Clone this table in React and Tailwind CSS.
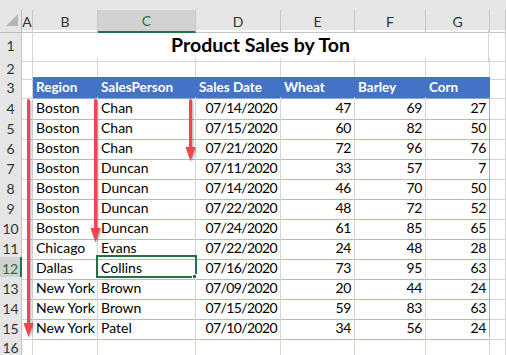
const cols = "grid grid-cols-[22px_11px_65px_98px_85px_74px_71px_64px_1fr]";

const rows = [
  ["Boston", "Chan", "07/14/2020", 47, 69, 27],
  ["Boston", "Chan", "07/15/2020", 60, 82, 50],
  ["Boston", "Chan", "07/21/2020", 72, 96, 76],
  ["Boston", "Duncan", "07/11/2020", 33, 57, 7],
  ["Boston", "Duncan", "07/14/2020", 46, 70, 50],
  ["Boston", "Duncan", "07/22/2020", 48, 72, 52],
  ["Boston", "Duncan", "07/24/2020", 61, 85, 65],
  ["Chicago", "Evans", "07/22/2020", 24, 48, 28],
  ["Dallas", "Collins", "07/16/2020", 73, 95, 63],
  ["New York", "Brown", "07/09/2020", 20, 44, 24],
  ["New York", "Brown", "07/15/2020", 59, 83, 63],
  ["New York", "Patel", "07/10/2020", 34, 56, 24],
];

const grid = "border-r border-b border-[#d4d4d4]";
const dataCell =
  "border-r border-b border-r-[#d4d4d4] border-b-[#a9b9e0] flex items-end pb-[1px] whitespace-nowrap";

function RowHead({ n, active }) {
  return active ? (
    <div className="flex items-center justify-center border-b border-[#c6c6c6] border-r-2 border-r-[#217346] bg-[#d2d2d2] text-[14px] text-[#217346]">
      {n}
    </div>
  ) : (
    <div className="flex items-center justify-center border-r border-b border-[#c6c6c6] bg-[#e6e6e6] text-[14px] text-[#333]">
      {n}
    </div>
  );
}

function Arrow({ left, top, height }) {
  return (
    <svg
      className="absolute drop-shadow-[1px_1px_1px_rgba(0,0,0,0.35)]"
      style={{ left, top }}
      width="11"
      height={height}
      viewBox={`0 0 11 ${height}`}
    >
      <rect x="4" y="0" width="3" height={height - 10} rx="1.5" fill="#f0464d" />
      <polygon points={`0.5,${height - 14} 10.5,${height - 14} 5.5,${height}`} fill="#f0464d" />
    </svg>
  );
}

export default function App() {
  return (
    <div className="relative h-[355px] w-[506px] overflow-hidden bg-white font-['Lato','Liberation_Sans',sans-serif] text-black">
      <div className="h-[10px] bg-[#e6e6e6]" />

      {/* column letters */}
      <div className={`${cols} h-[20px] bg-[#e6e6e6] text-[14px] text-[#333]`}>
        <div className="relative border-r border-b border-[#bdbdbd]">
          <svg className="absolute left-[6px] top-[4px]" width="12" height="12" viewBox="0 0 12 12">
            <polygon points="12,0 12,12 0,12" fill="#b5b5b5" />
          </svg>
        </div>
        {["A", "B"].map((c) => (
          <div key={c} className="flex items-center justify-center border-r border-b border-[#c6c6c6]">
            {c}
          </div>
        ))}
        <div className="flex items-center justify-center border-r border-[#c6c6c6] border-b-2 border-b-[#217346] bg-[#d2d2d2] text-[#217346]">
          C
        </div>
        {["D", "E", "F", "G", ""].map((c, i) => (
          <div key={i} className="flex items-center justify-center border-r border-b border-[#c6c6c6]">
            {c}
          </div>
        ))}
      </div>

      {/* row 1 title */}
      <div className="grid grid-cols-[22px_11px_456px_1fr] h-[28px]">
        <RowHead n={1} />
        <div className={grid} />
        <div className={`${grid} flex items-end justify-center pb-[2px] text-[19.5px] font-bold`}>
          Product Sales by Ton
        </div>
        <div className={grid} />
      </div>

      {/* row 2 */}
      <div className={`${cols} h-[19px]`}>
        <RowHead n={2} />
        {Array.from({ length: 8 }).map((_, i) => (
          <div key={i} className={grid} />
        ))}
      </div>

      {/* row 3 header */}
      <div className={`${cols} h-[20px] text-[13.5px]`}>
        <RowHead n={3} />
        <div className={grid} />
        {["Region", "SalesPerson", "Sales Date", "Wheat", "Barley", "Corn"].map((h) => (
          <div
            key={h}
            className="flex items-end border-r border-b border-r-[#4472c4] border-b-[#8ea9db] bg-[#4472c4] pb-[1px] pl-[3px] font-bold text-white"
          >
            {h}
          </div>
        ))}
        <div className={grid} />
      </div>

      {rows.map((r, i) => (
        <div key={i} className={`${cols} h-[20px] text-[14px]`}>
          <RowHead n={i + 4} active={i + 4 === 12} />
          <div className={grid} />
          <div className={`${dataCell} pl-[3px]`}>{r[0]}</div>
          <div className={`${dataCell} pl-[3px]`}>{r[1]}</div>
          <div className={`${dataCell} justify-end pr-[3px] tracking-[-0.6px]`}>{r[2]}</div>
          <div className={`${dataCell} justify-end pr-[3px] tracking-[-0.4px]`}>{r[3]}</div>
          <div className={`${dataCell} justify-end pr-[3px] tracking-[-0.4px]`}>{r[4]}</div>
          <div className="flex items-end justify-end border-r border-b border-r-[#8ea9db] border-b-[#a9b9e0] pb-[1px] pr-[3px] tracking-[-0.4px]">
            {r[5]}
          </div>
          <div className={grid} />
        </div>
      ))}

      {/* row 16 */}
      <div className={`${cols} h-[20px]`}>
        <RowHead n={16} />
        {Array.from({ length: 8 }).map((_, i) => (
          <div key={i} className={grid} />
        ))}
      </div>

      {/* selected cell C12 */}
      <div className="absolute left-[96px] top-[255px] h-[23px] w-[101px] border-2 border-[#217346]" />
      <div className="absolute left-[192px] top-[274px] h-[5px] w-[5px] border border-white bg-[#217346]" />

      <Arrow left={23} top={99} height={238} />
      <Arrow left={90} top={99} height={143} />
      <Arrow left={185} top={99} height={62} />
    </div>
  );
}
